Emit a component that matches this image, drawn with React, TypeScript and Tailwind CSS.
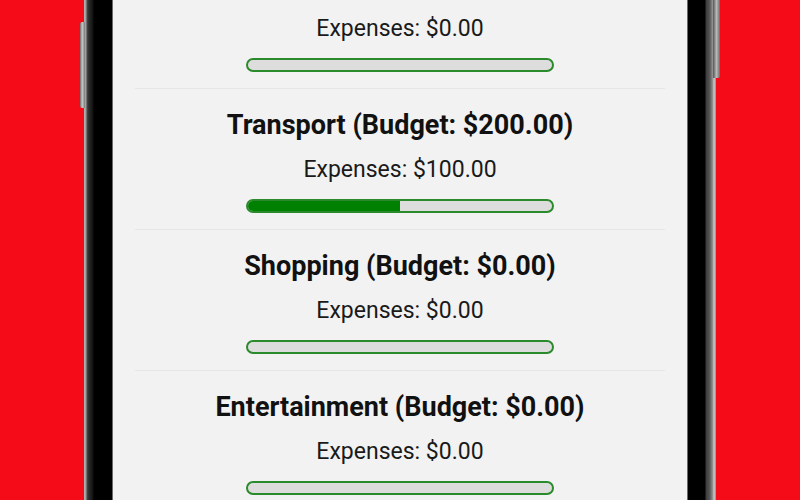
import React from "react";

type Cat = { name: string; budget: number; spent: number };

const cats: Cat[] = [
  { name: "Food", budget: 0, spent: 0 },
  { name: "Transport", budget: 200, spent: 100 },
  { name: "Shopping", budget: 0, spent: 0 },
  { name: "Entertainment", budget: 0, spent: 0 },
];

function Section({ c }: { c: Cat }) {
  const pct = c.budget > 0 ? Math.min(100, (c.spent / c.budget) * 100) : 0;
  return (
    <div className="flex flex-col items-center border-b border-[#e6e6e6] pt-[21px] pb-[16px]">
      <div className="h-[30px] text-[27px] leading-[30px] font-bold text-[#111111] whitespace-nowrap">
        {c.name} (Budget: ${c.budget.toFixed(2)})
      </div>
      <div className="mt-[16px] h-[28px] text-[23px] leading-[28px] text-[#1a1a1a] whitespace-nowrap">
        Expenses: ${c.spent.toFixed(2)}
      </div>
      <div className="mt-[15px] h-[14px] w-[308px] rounded-full border-2 border-[#2b8a2b] bg-[#dddddd] overflow-hidden">
        <div className="h-full bg-[#008000]" style={{ width: `${pct}%` }} />
      </div>
    </div>
  );
}

export default function App() {
  return (
    <div
      className="h-[500px] w-[800px] overflow-hidden bg-[#f50a18] flex justify-center"
      style={{ fontFamily: "Roboto, 'Noto Sans', sans-serif" }}
    >
      <div className="relative -mt-[60px] h-[620px] w-[632px] shrink-0">
        {/* side buttons */}
        <div className="absolute left-[-4px] top-[82px] h-[86px] w-[5px] rounded-l-[2px] bg-[linear-gradient(90deg,#6a6a6a,#c8c8c8_45%,#7a7a7a)]" />
        <div className="absolute right-[-4px] top-[0px] h-[138px] w-[7px] rounded-r-[2px] bg-[linear-gradient(90deg,#555,#b8b8b8_50%,#6a6a6a)]" />
        {/* metal frame */}
        <div className="flex h-full w-full bg-[linear-gradient(90deg,#b4b4b4_0px,#9a9a9a_2px,#4a4a4a_3px,#2a2a2a_5px,#111_9px,#000_10px,#000_calc(100%-11px),#3a3a3a_calc(100%-10px),#5a5a5a_calc(100%-6px),#9a9a9a_calc(100%-3px),#cfcfcf_calc(100%-2px),#8a8a8a_100%)] pl-[28px] pr-[28px]">
          <div className="flex-1 border-x border-[#6a6a6a] bg-[#f2f2f2] overflow-hidden">
            <div className="mx-[22px] mt-[8px]">
              {cats.map((c) => (
                <Section key={c.name} c={c} />
              ))}
            </div>
          </div>
        </div>
      </div>
    </div>
  );
}
